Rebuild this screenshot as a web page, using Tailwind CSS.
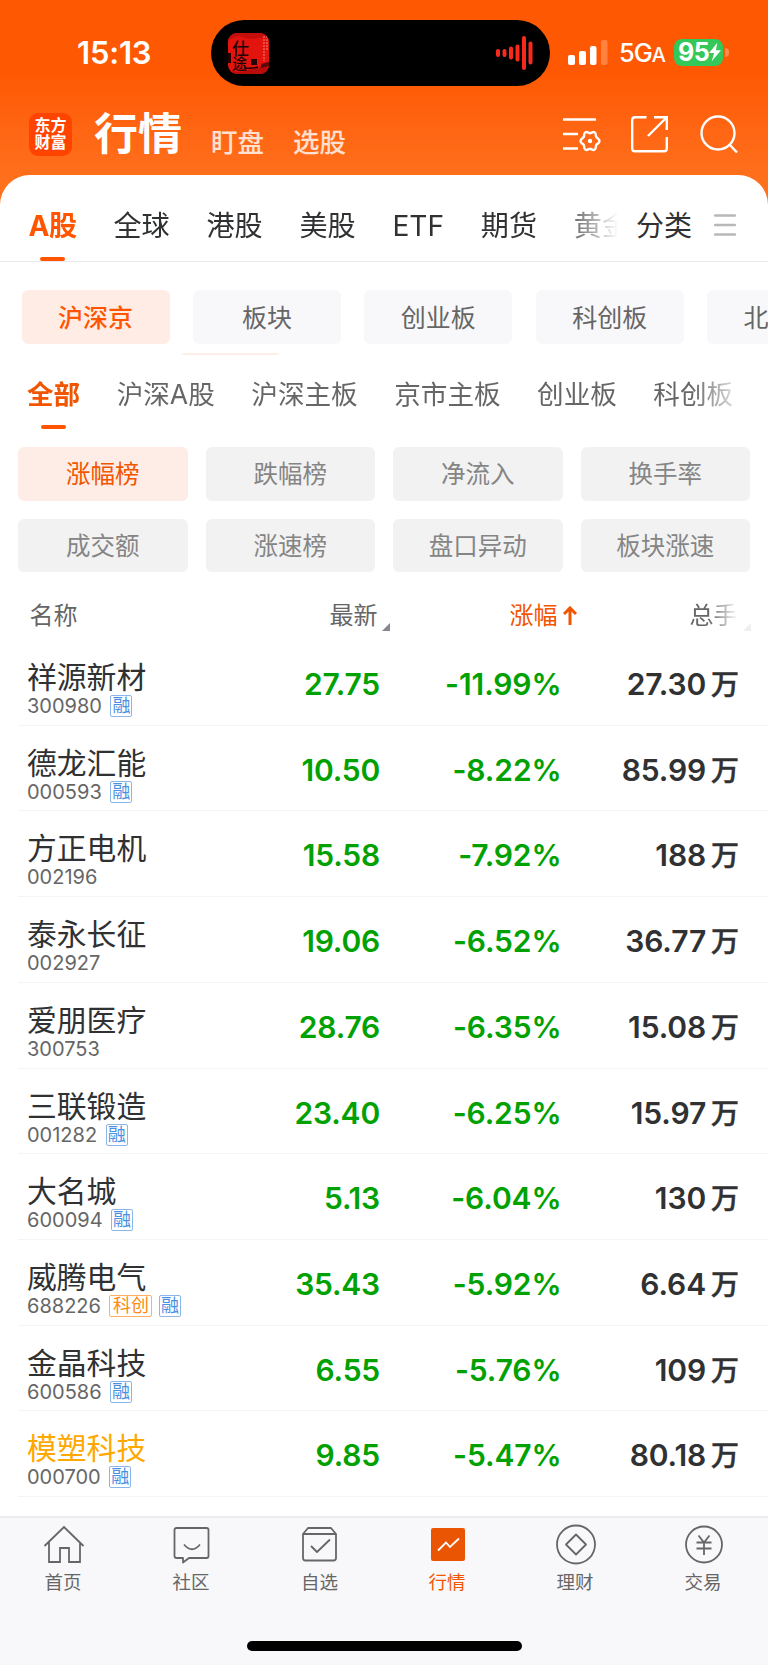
<!DOCTYPE html>
<html lang="zh-CN">
<head>
    <meta charset="UTF-8">
    <meta name="viewport" content="width=device-width, initial-scale=1.0">
    <title>行情</title>
    <script src="https://cdn.jsdelivr.net/npm/@tailwindcss/browser@4"></script>
</head>
<body class="bg-white font-['Inter','Noto_Sans_CJK_SC',sans-serif] text-[#303133]">
<div class="w-[768px] h-[1665px] overflow-hidden flex flex-col">

    <div class="h-[205px] shrink-0 bg-linear-to-b from-[#ff5802] from-35% to-[#ff711d] to-90% text-white">
        <!-- status bar -->
        <div class="h-[106px] pt-5 flex">
            <div class="w-[211px] h-[66px] pl-[77px] flex items-center text-[31px] tracking-[-0.2px] font-semibold">15:13</div>
            <div class="w-[339px] h-[66px] rounded-full bg-black flex items-center justify-between pl-[17px] pr-[17px]">
                <svg width="41" height="41" viewBox="0 0 41 41">
                    <defs><clipPath id="cover"><rect width="41" height="41" rx="9"/></clipPath></defs>
                    <g clip-path="url(#cover)">
                        <rect width="41" height="41" fill="#e3130e"/>
                        <path d="M0 0h41v4L22 6 10 3 0 7z" fill="#c40e0c"/>
                        <path d="M0 38l12 1 16-4 13-4v10H0z" fill="#b80c0b"/>
                        <path d="M33 31l8-2v4l-8 2z" fill="#5c0808"/>
                        <path d="M0 20h3v10H0z" fill="#200"/>
                        <path d="M36 3v25M39 3v14" stroke="#e8746c" stroke-width="1.200" stroke-dasharray="2 1"/>
                        <text x="4" y="22" font-size="17" font-weight="500" fill="#240304" font-family="Noto Sans CJK SC">仕</text>
                        <text x="4" y="36" font-size="15" font-weight="500" fill="#240304" font-family="Noto Sans CJK SC">途</text>
                        <path d="M23 26h6v6h-6z" fill="#240304"/>
                        <path d="M16 35q8 1 14-1" stroke="#240304" stroke-width="1.500" fill="none"/>
                    </g>
                </svg>
                <svg width="38" height="36" viewBox="0 0 38 36" stroke="#f92a1c" stroke-width="4" stroke-linecap="round">
                    <path d="M3 16v4M9.500 16v4M16 13.500v9M22.500 11.500v13M29 3v30M35.500 8.500v19"/>
                </svg>
            </div>
            <div class="h-[66px] flex items-center pl-[18px]">
                <svg class="-mt-[2px]" width="40" height="25" viewBox="0 0 40 25" fill="#fff">
                    <rect x="0" y="15" width="7" height="10" rx="2"/>
                    <rect x="11" y="11" width="7" height="14" rx="2"/>
                    <rect x="22" y="6" width="6.500" height="19" rx="2"/>
                    <rect x="33" y="0" width="6.500" height="25" rx="2" opacity=".25"/>
                </svg>
                <div class="ml-[11px] w-[44px] text-[25.500px] font-medium tracking-[-1px] whitespace-nowrap">5G<span class="text-[20px]">A</span></div>
                <div class="ml-[11px] -mt-[2px] w-[49px] h-[27px] rounded-[8px] bg-[#34c759] flex items-center pl-[4px]">
                    <span class="text-[25px] leading-none font-bold tracking-[-0.5px]">95</span>
                    <svg class="shrink-0" width="12" height="20" viewBox="0 0 13 20" fill="#fff"><path d="M9 0L0 11h5.500L3 20l10-12H7.500z"/></svg>
                </div>
                <div class="ml-[2px] -mt-[2px] w-[4px] h-[9px] rounded-r-full bg-white/30"></div>
            </div>
        </div>

        <!-- app header -->
        <div class="h-[56px] flex items-center px-[29px]">
            <div class="w-[43px] h-[43px] rounded-[9px] bg-[#ff4400] flex flex-col items-center justify-center text-[16px] leading-[17px] font-bold">
                <span>东方</span><span>财富</span>
            </div>
            <div class="ml-[22px] text-[44px] leading-[56px] font-bold">行情</div>
            <div class="ml-[29px] mt-[16px] text-[26.500px] leading-[32px] font-medium text-white/80">盯盘</div>
            <div class="ml-[29px] mt-[16px] text-[26.500px] leading-[32px] font-medium text-white/80">选股</div>
            <div class="ml-auto mr-[1px] flex items-center gap-[30px]">
                <svg width="38" height="38" viewBox="0 0 38 38" fill="none" stroke="#fff" stroke-width="2.400">
                    <path d="M0 4.500h33M0 19h15M0 33.500h15"/>
                    <path d="M27 18.200c1.500 0 2.800-2 4.600-.9 1.800 1 .8 3.200 1.600 4.600.8 1.400 3.300 1.700 3.300 4.100s-2.500 2.700-3.300 4.100c-.8 1.400.2 3.600-1.600 4.600-1.800 1.100-3.100-.9-4.600-.9s-2.800 2-4.600.9c-1.800-1-.8-3.200-1.600-4.600-.8-1.400-3.300-1.700-3.300-4.100s2.500-2.700 3.300-4.100c.8-1.400-.2-3.600 1.600-4.600 1.800-1.100 3.100.9 4.600.9z" stroke-linejoin="round"/>
                    <circle cx="27" cy="26" r="2.200" fill="#fff" stroke="none"/>
                </svg>
                <svg width="37" height="38" viewBox="0 0 37 38" fill="none" stroke="#fff" stroke-width="2.400">
                    <path d="M15.500 2.200H4Q1.200 2.200 1.200 5v28.500q0 2.800 2.800 2.800h29q2.800 0 2.800-2.800V22M23 2.200h12.800V15M35.500 2.500L17 21"/>
                </svg>
                <svg class="ml-[2px]" width="38" height="38" viewBox="0 0 38 38" fill="none" stroke="#fff" stroke-width="2.400">
                    <circle cx="18" cy="18" r="16.500"/><path d="M29 29l8 8.500"/>
                </svg>
            </div>
        </div>
    </div>

    <div class="-mt-[30px] pt-[23px] h-[87px] shrink-0 bg-white rounded-t-[30px] border-b border-[#e9e9eb] flex">
        <div class="w-[618px] pl-[28.500px] flex gap-[36.800px] text-[28.100px] leading-[56px] whitespace-nowrap overflow-hidden mask-r-from-90% mask-r-to-100%">
            <div class="flex flex-col items-center text-[#ff5500] font-bold tracking-[-0.5px]">A股<span class="mt-[3px] w-[25px] h-[4px] rounded-full bg-[#ff5500]"></span></div>
            <div>全球</div>
            <div>港股</div>
            <div>美股</div>
            <div>ETF</div>
            <div>期货</div>
            <div>黄金</div>
        </div>
        <div class="ml-[18px] text-[28px] leading-[56px]">分类</div>
        <svg class="ml-[22px] mt-[16px]" width="22" height="22" viewBox="0 0 22 22" stroke="#b8b8b8" stroke-width="2.400" stroke-linecap="round"><path d="M1 1.500h20M1 11h20M1 20.500h20"/></svg>
    </div>

    <div class="mt-[28px] pl-[21.500px] h-[54px] shrink-0 flex gap-[23.400px] text-[25px] leading-[56px] text-center text-[#666]">
        <div class="w-[148px] shrink-0 rounded-md bg-[#ffede5] text-[#ff5500] font-medium">沪深京</div>
        <div class="w-[148px] shrink-0 rounded-md bg-[#f8f8fa]">板块</div>
        <div class="w-[148px] shrink-0 rounded-md bg-[#f8f8fa]">创业板</div>
        <div class="w-[148px] shrink-0 rounded-md bg-[#f8f8fa]">科创板</div>
        <div class="w-[148px] shrink-0 rounded-md bg-[#f8f8fa]">北交所</div>
    </div>
    <div class="ml-[182px] mt-[9px] w-[97px] h-[2px] shrink-0 rounded-b-full bg-[#ffede8]"></div>

    <div class="mt-[13px] h-[61px] pl-[27px] w-[745px] shrink-0 flex gap-[36.500px] text-[26.600px] leading-[53px] text-[#666] whitespace-nowrap mask-r-from-93% mask-r-to-100%">
        <div class="flex flex-col items-center text-[#f25500] font-bold">全部<span class="mt-[4px] w-[25px] h-[4px] rounded-full bg-[#ff5500]"></span></div>
        <div>沪深A股</div>
        <div>沪深主板</div>
        <div>京市主板</div>
        <div>创业板</div>
        <div>科创板</div>
    </div>

    <div class="mt-[18px] px-[18px] shrink-0 grid grid-cols-4 gap-x-[18px] gap-y-[18px] text-[24.500px] leading-[55.500px] text-center text-[#858585]">
        <div class="h-[53.500px] rounded-md bg-[#fdede6] text-[#f25500]">涨幅榜</div>
        <div class="h-[53.500px] rounded-md bg-[#f2f2f2]">跌幅榜</div>
        <div class="h-[53.500px] rounded-md bg-[#f2f2f2]">净流入</div>
        <div class="h-[53.500px] rounded-md bg-[#f2f2f2]">换手率</div>
        <div class="h-[53.500px] rounded-md bg-[#f2f2f2]">成交额</div>
        <div class="h-[53.500px] rounded-md bg-[#f2f2f2]">涨速榜</div>
        <div class="h-[53.500px] rounded-md bg-[#f2f2f2]">盘口异动</div>
        <div class="h-[53.500px] rounded-md bg-[#f2f2f2]">板块涨速</div>
    </div>

    <!-- table head -->
    <div class="h-[68px] pt-[24px] pl-[29.500px] shrink-0 flex text-[24px] leading-[40px] text-[#666]">
        <div class="w-[300px]">名称</div>
        <div class="w-[180px] flex">最新<svg class="ml-[4px] mt-[27px]" width="8" height="8"><path d="M8 0v8H0z" fill="#85888f"/></svg></div>
        <div class="w-[180px] flex text-[#f25500]">涨幅
            <svg class="ml-[5px] mt-[10px]" width="14" height="19" viewBox="0 0 14 19" fill="none" stroke="#f25500" stroke-width="3"><path d="M7 19V2M1 8l6-6 6 6"/></svg>
        </div>
        <div class="flex"><span class="mask-r-from-40% mask-r-to-100%">总手</span><svg class="ml-[5px] mt-[27px]" width="8" height="8"><path d="M8 0v8H0z" fill="#eeeff0"/></svg></div>
    </div>

    <div id="list" class="shrink-0"></div>

    <!-- bottom tabs -->
    <div class="mt-auto h-[149px] shrink-0 bg-[#f8f8fb] border-t-2 border-[#ececef] flex flex-col items-center">
        <div class="w-full grid grid-cols-6 pt-[6px] text-[18.500px] leading-[28px] text-center text-[#666]">
            <div class="flex flex-col items-center">
                <svg width="42" height="42" viewBox="0 0 42 42" fill="none" stroke="#666" stroke-width="1.800"><path d="M1.500 22L21 3l19.500 19M6 18v20h11V24h9v14h11V18"/></svg>
                <span class="mt-[2px] -ml-[2px]">首页</span>
            </div>
            <div class="flex flex-col items-center">
                <svg width="42" height="42" viewBox="0 0 42 42" fill="none" stroke="#666" stroke-width="1.800" stroke-linejoin="round"><path d="M5.500 4h30q2 0 2 2v26q0 2-2 2H18l-6 4.500V34H5.500q-2 0-2-2V6q0-2 2-2zM13 20.500q8 9.500 16 0"/></svg>
                <span class="mt-[2px] -ml-[2px]">社区</span>
            </div>
            <div class="flex flex-col items-center">
                <svg width="42" height="42" viewBox="0 0 42 42" fill="none" stroke="#666" stroke-width="1.800" stroke-linejoin="round"><path d="M4 10v24q0 2.500 2.500 2.500h28q2.500 0 2.500-2.500V10zM4 10l5-6h23l5 6M12 22l6 6 13-12.500"/></svg>
                <span class="mt-[2px] -ml-[1px]">自选</span>
            </div>
            <div class="flex flex-col items-center text-[#f25500]">
                <svg width="42" height="42" viewBox="0 0 42 42"><rect x="4" y="4" width="34" height="33" rx="2" fill="#ea5504"/><path d="M11 26.500l8-8 4 4.500 9-8.500" fill="none" stroke="#fff" stroke-width="1.800"/></svg>
                <span class="mt-[2px] -ml-[2px]">行情</span>
            </div>
            <div class="flex flex-col items-center">
                <svg width="42" height="42" viewBox="0 0 42 42" fill="none" stroke="#666" stroke-width="1.800" stroke-linejoin="round"><circle cx="21" cy="20.500" r="19"/><path d="M21 10.500l10 10-10 10-10-10z"/></svg>
                <span class="mt-[2px] -ml-[2px]">理财</span>
            </div>
            <div class="flex flex-col items-center">
                <svg width="42" height="42" viewBox="0 0 42 42" fill="none" stroke="#666" stroke-width="1.800"><circle cx="21" cy="20.500" r="18"/><path d="M15.500 11.500l5.500 7 5.500-7M21 18v13M13.500 18.500h15M13.500 24.500h15"/></svg>
                <span class="mt-[2px] -ml-[2px]">交易</span>
            </div>
        </div>
        <div class="mt-auto mb-[14px] w-[275px] h-[10px] rounded-full bg-black"></div>
    </div>
</div>

<script>
    const rows = [
        ['祥源新材', '300980', '27.75', '-11.99%', '27.30', '融'],
        ['德龙汇能', '000593', '10.50', '-8.22%', '85.99', '融'],
        ['方正电机', '002196', '15.58', '-7.92%', '188', ''],
        ['泰永长征', '002927', '19.06', '-6.52%', '36.77', ''],
        ['爱朋医疗', '300753', '28.76', '-6.35%', '15.08', ''],
        ['三联锻造', '001282', '23.40', '-6.25%', '15.97', '融'],
        ['大名城', '600094', '5.13', '-6.04%', '130', '融'],
        ['威腾电气', '688226', '35.43', '-5.92%', '6.64', '科创 融'],
        ['金晶科技', '600586', '6.55', '-5.76%', '109', '融'],
        ['模塑科技', '000700', '9.85', '-5.47%', '80.18', '融'],
    ];

    const tagClass = {
        '融': 'w-[22px] border-[#8ab6ec] text-[#4a90e2]',
        '科创': 'w-[43px] border-[#ffb066] text-[#ff8a0f]',
    };

    document.getElementById('list').innerHTML = rows.map(([name, code, price, pct, vol, tags]) => `
        <div class="h-[85.720px] ml-[18px] border-b border-[#f4f4f6] flex">
            <div class="w-[182px] pl-[9px] pt-[18px]">
                <div class="text-[29.800px] leading-[38px] ${name === '模塑科技' ? 'text-[#ffa800]' : ''}">${name}</div>
                <div class="flex items-center h-[22px] -mt-[1px] text-[20px] text-[#666]">
                    <span class="mr-[2px]">${code}</span>
                    ${tags.split(' ').filter(Boolean).map(t => `<span class="ml-[6.500px] h-[22px] border rounded-[2px] flex items-center justify-center text-[18px] leading-none ${tagClass[t]}">${t}</span>`).join('')}
                </div>
            </div>
            <div class="w-[180px] text-right text-[30px] leading-[88px] font-semibold tracking-[-0.200px] text-[#00a100]">${price}</div>
            <div class="w-[181.500px] text-right text-[30px] leading-[88px] font-semibold tracking-[-0.100px] text-[#00a100]">${pct}</div>
            <div class="w-[177.500px] text-right text-[30px] leading-[88px] font-semibold tracking-[-0.100px]">${vol}<span class="ml-[5px] text-[28px] font-medium [-webkit-text-stroke:0.5px_#303133]">万</span></div>
        </div>`).join('');
</script>
</body>
</html>
